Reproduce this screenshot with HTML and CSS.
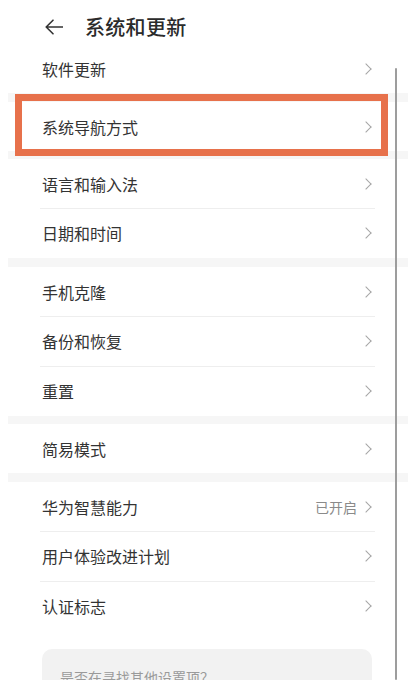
FILE: index.html
```html
<!DOCTYPE html>
<html lang="zh-CN">
<head>
<meta charset="utf-8">
<title>系统和更新</title>
<link rel="stylesheet" href="styles.css">
</head>
<body>
<div class="screen">
  <header class="topbar">
    <svg class="back" width="18" height="16" viewBox="0 0 18 16" aria-hidden="true">
      <path d="M17.5 8H1.5M8 1.2L1.2 8L8 14.8" fill="none" stroke="#333" stroke-width="1.6" stroke-linecap="round" stroke-linejoin="round"/>
    </svg>
    <h1 class="title">系统和更新</h1>
  </header>

  <div class="list">
    <section class="group">
      <div class="row"><span class="label">软件更新</span><span class="chev"></span></div>
    </section>
    <div class="band"></div>
    <section class="group">
      <div class="row"><span class="label">系统导航方式</span><span class="chev"></span></div>
    </section>
    <div class="band band-sm"></div>
    <section class="group">
      <div class="row"><span class="label">语言和输入法</span><span class="chev"></span></div>
      <div class="row"><span class="label">日期和时间</span><span class="chev"></span></div>
    </section>
    <div class="band"></div>
    <section class="group">
      <div class="row"><span class="label">手机克隆</span><span class="chev"></span></div>
      <div class="row"><span class="label">备份和恢复</span><span class="chev"></span></div>
      <div class="row"><span class="label">重置</span><span class="chev"></span></div>
    </section>
    <div class="band band-sm"></div>
    <section class="group">
      <div class="row"><span class="label">简易模式</span><span class="chev"></span></div>
    </section>
    <div class="band"></div>
    <section class="group">
      <div class="row"><span class="label">华为智慧能力</span><span class="value">已开启</span><span class="chev"></span></div>
      <div class="row"><span class="label">用户体验改进计划</span><span class="chev"></span></div>
      <div class="row"><span class="label">认证标志</span><span class="chev"></span></div>
    </section>
  </div>

  <div class="card">
    <p class="card-text">是否在寻找其他设置项？</p>
  </div>

  <div class="scrollbar"></div>
  <div class="highlight"></div>
</div>
</body>
</html>
```

FILE: styles.css
```css
* { box-sizing: border-box; }

html, body {
  margin: 0;
  padding: 0;
  background: #ffffff;
}

body {
  font-family: "Noto Sans CJK SC", "Noto Sans", sans-serif;
  color: #333333;
}

.screen {
  position: relative;
  width: 415px;
  height: 680px;
  overflow: hidden;
  background: #ffffff;
}

.topbar {
  height: 44px;
  display: flex;
  align-items: center;
  padding-left: 45px;
  padding-top: 10px;
}

.back {
  display: block;
  flex: none;
}

.title {
  margin: 0 0 0 22px;
  font-size: 20px;
  font-weight: 500;
  line-height: 24px;
  color: #2b2b2b;
  letter-spacing: 0.3px;
}

.list {
  margin: 0 7px 0 8px;
}

.group {
  display: flex;
  flex-direction: column;
}

.row {
  height: 49px;
  display: flex;
  align-items: center;
  padding: 0 36px 0 34px;
  position: relative;
}

.row + .row {
  height: 50px;
  border-top: 1px solid #efefef;
  background-clip: padding-box;
}

.row + .row {
  border-top: none;
}

.row + .row::before {
  content: "";
  position: absolute;
  left: 32px;
  right: 33px;
  top: 0;
  height: 1px;
  background: #eeeeee;
}

.label {
  flex: 1;
  font-size: 16px;
  line-height: 22px;
  color: #333333;
}

.value {
  font-size: 14px;
  line-height: 20px;
  color: #8a8a8a;
  margin-right: 7px;
}

.chev {
  width: 8px;
  height: 12px;
  flex: none;
  position: relative;
}

.chev::after {
  content: "";
  position: absolute;
  left: -2px;
  top: 2px;
  width: 7px;
  height: 7px;
  border-top: 1.4px solid #a5a5a5;
  border-right: 1.4px solid #a5a5a5;
  transform: rotate(45deg);
}

.band {
  height: 9px;
  background: #f6f6f6;
}

.band-sm {
  height: 8px;
}

.card {
  margin: 18px 43px 0 42px;
  height: 60px;
  border-radius: 10px;
  background: #f2f2f2;
  padding: 18px 0 0 18px;
}

.card-text {
  margin: 0;
  font-size: 14px;
  line-height: 20px;
  color: #9a9a9a;
}

.scrollbar {
  position: absolute;
  left: 395px;
  top: 68px;
  width: 2px;
  bottom: 0;
  background: #9d9d9d;
  border-radius: 1px;
}

.highlight {
  position: absolute;
  left: 15px;
  top: 94px;
  width: 373px;
  height: 62px;
  border: 7px solid #e7714b;
}
```
